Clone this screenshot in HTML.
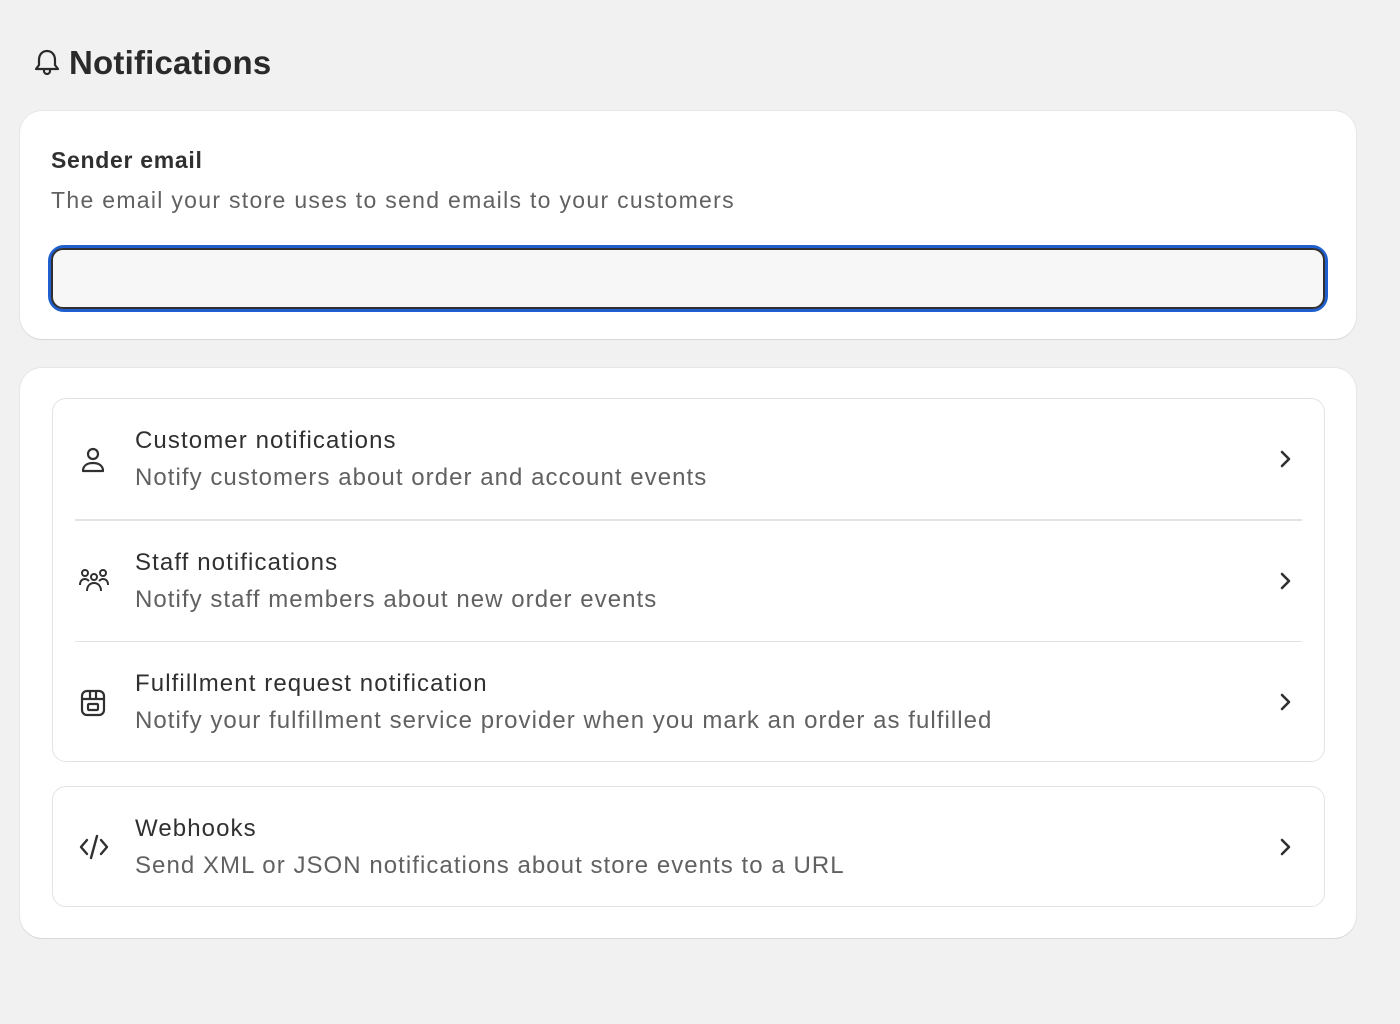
<!DOCTYPE html>
<html><head><meta charset="utf-8"><style>
*{box-sizing:border-box;margin:0;padding:0}
body{width:1400px;height:1024px;background:#f1f1f1;font-family:"Liberation Sans",sans-serif;color:#303030;position:relative;overflow:hidden}
.h{position:absolute;left:33px;top:44px;font-size:33px;font-weight:bold;display:flex;align-items:center;gap:8px;color:#2a2a2a;letter-spacing:0.2px}
.card{position:absolute;left:20px;width:1336px;background:#fff;border-radius:22px;box-shadow:0 1px 0 #d8d8d8,0 0 0 1px #e6e6e6}
.t{position:absolute;left:51px;font-size:23px;font-weight:bold;color:#303030;letter-spacing:0.7px}
.d{position:absolute;left:51px;font-size:23px;color:#616161;letter-spacing:1.3px}
.inp{position:absolute;left:48px;top:245px;width:1280px;height:67px;border:3px solid #1f5fd0;border-radius:16px;padding:0}
.inp div{width:100%;height:100%;border:2px solid #303030;border-radius:12px;background:#f7f7f7}
.box{position:absolute;left:52px;width:1273px;border:1.5px solid #e3e3e3;border-radius:14px;background:#fff}
.row{position:relative;height:120px}
.row .ic{position:absolute;left:26px;top:46px}
.row .rt{position:absolute;left:82px;top:28px;font-size:24px;color:#303030;letter-spacing:1.1px}
.row .rs{position:absolute;left:82px;top:65px;font-size:24px;color:#616161;letter-spacing:1.05px}
.row .ch{position:absolute;right:32px;top:50px}
.sep{height:1.5px;background:#e3e3e3;margin:0 22px}
</style></head><body>
<div class="h"><svg width="28" height="30" viewBox="0 0 28 30" fill="none" stroke="#2a2a2a" stroke-width="2.2" stroke-linejoin="round"><path d="M14 3c-5 0-8 4-8 9v5l-3 4h22l-3-4v-5c0-5-3-9-8-9z"/><path d="M11 21v2a3 3 0 0 0 6 0v-2"/></svg>Notifications</div>
<div class="card" style="top:111px;height:228px">
</div>
<div class="t" style="top:147px">Sender email</div>
<div class="d" style="top:187px">The email your store uses to send emails to your customers</div>
<div class="inp"><div></div></div>
<div class="card" style="top:368px;height:570px"></div>
<div class="box" style="top:398px;height:364px">
 <div class="row"><svg class="ic" width="28" height="30" viewBox="0 0 28 30" fill="none" stroke="#303030" stroke-width="2.2"><circle cx="14" cy="9" r="5"/><path d="M4 26c0-6 5-8 10-8s10 2 10 8z" stroke-linejoin="round"/></svg><div class="rt">Customer notifications</div><div class="rs">Notify customers about order and account events</div><svg class="ch" width="14" height="20" viewBox="0 0 14 20" fill="none" stroke="#303030" stroke-width="2.6" stroke-linecap="round" stroke-linejoin="round"><path d="M4 3l7 7-7 7"/></svg></div>
 <div class="sep"></div>
 <div class="row"><svg class="ic" width="30" height="28" viewBox="0 0 30 28" fill="none" stroke="#303030" stroke-width="2"><circle cx="6" cy="6" r="3"/><circle cx="24" cy="6" r="3"/><circle cx="15" cy="10" r="3"/><path d="M1 18c0-4 2-6 5-6 2 0 3 1 4 2M29 18c0-4-2-6-5-6-2 0-3 1-4 2M8 24c0-5 3-8 7-8s7 3 7 8"/></svg><div class="rt">Staff notifications</div><div class="rs">Notify staff members about new order events</div><svg class="ch" width="14" height="20" viewBox="0 0 14 20" fill="none" stroke="#303030" stroke-width="2.6" stroke-linecap="round" stroke-linejoin="round"><path d="M4 3l7 7-7 7"/></svg></div>
 <div class="sep"></div>
 <div class="row"><svg class="ic" width="28" height="30" viewBox="0 0 28 30" fill="none" stroke="#303030" stroke-width="2.2"><rect x="3" y="3" width="22" height="24" rx="5"/><path d="M3 11h22M11 3v8M17 3v8"/><rect x="9" y="16" width="10" height="6" rx="1"/></svg><div class="rt">Fulfillment request notification</div><div class="rs">Notify your fulfillment service provider when you mark an order as fulfilled</div><svg class="ch" width="14" height="20" viewBox="0 0 14 20" fill="none" stroke="#303030" stroke-width="2.6" stroke-linecap="round" stroke-linejoin="round"><path d="M4 3l7 7-7 7"/></svg></div>
</div>
<div class="box" style="top:786px;height:121px">
 <div class="row"><svg class="ic" width="30" height="28" viewBox="0 0 30 28" fill="none" stroke="#303030" stroke-width="2.4" stroke-linecap="round" stroke-linejoin="round"><path d="M8 7l-6 7 6 7M22 7l6 7-6 7M18 3l-6 22"/></svg><div class="rt">Webhooks</div><div class="rs">Send XML or JSON notifications about store events to a URL</div><svg class="ch" width="14" height="20" viewBox="0 0 14 20" fill="none" stroke="#303030" stroke-width="2.6" stroke-linecap="round" stroke-linejoin="round"><path d="M4 3l7 7-7 7"/></svg></div>
</div>
</body></html>
